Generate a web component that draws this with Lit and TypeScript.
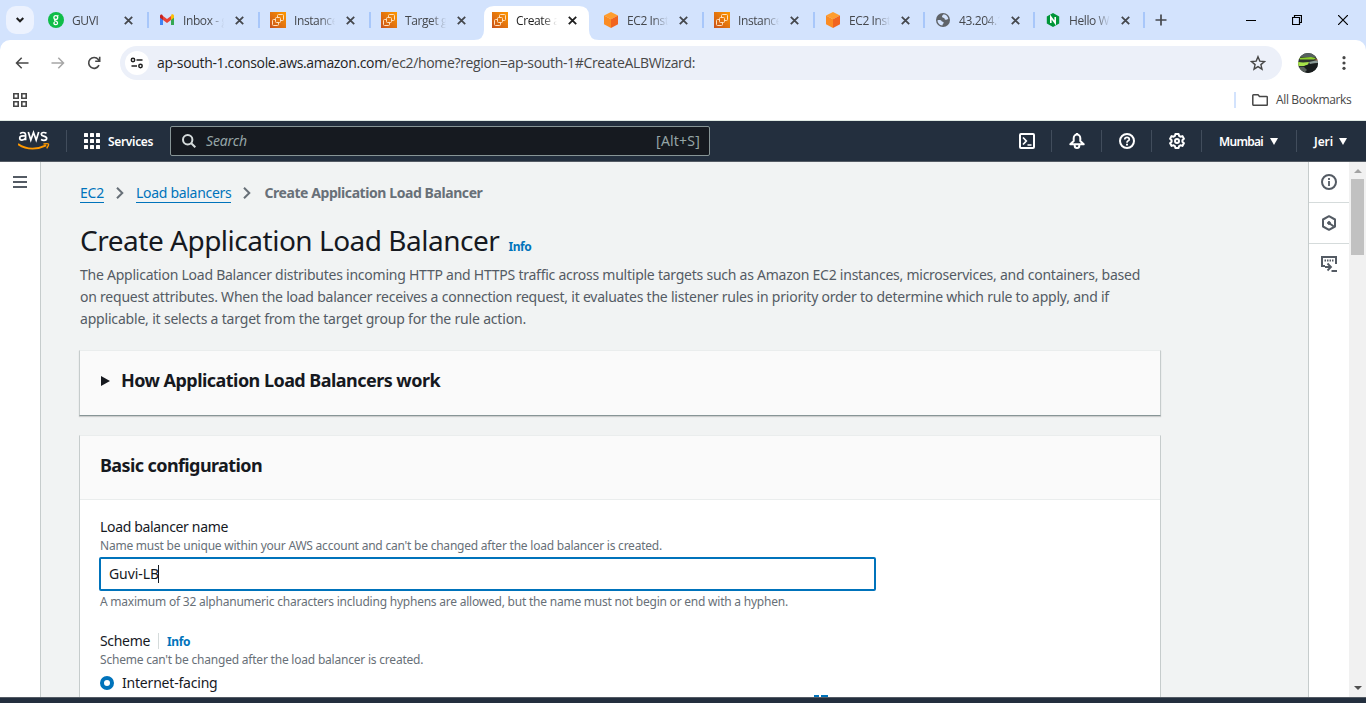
import { LitElement, html, css, svg, nothing } from "lit";
import { customElement } from "lit/decorators.js";

const favEc2 = html`<svg width="16" height="16" viewBox="0 0 16 16"><defs><linearGradient id="g" x1="0" y1="1" x2="1" y2="0"><stop offset="0" stop-color="#c8511b"/><stop offset="1" stop-color="#f90"/></linearGradient></defs><rect width="16" height="16" fill="url(#g)"/><g fill="none" stroke="#ffe0bd" stroke-width="1"><rect x="5.500" y="5.500" width="5" height="5" rx="1"/><path d="M7.500 5V3.500q0-1 1-1h4q1 0 1 1v4q0 1-1 1H11"/><path d="M5 7.500H3.500q-1 0-1 1v4q0 1 1 1h4q1 0 1-1V11"/></g></svg>`;
const favCube = html`<svg width="16" height="16" viewBox="0 0 16 16"><path d="M8 0l7 3.500L8 7.300 1 3.500z" fill="#ff9d2e"/><path d="M1 3.500l7 3.800V16l-7-3.800z" fill="#fb8c23"/><path d="M15 3.500L8 7.300V16l7-3.800z" fill="#f1641f"/></svg>`;
const favGuvi = html`<svg width="16" height="16" viewBox="0 0 16 16"><circle cx="8" cy="8" r="8" fill="#0fbd49"/><g fill="none" stroke="#fff" stroke-width="1.300"><circle cx="7.800" cy="5.600" r="1.900"/><path d="M9.500 3.900l.900-.500M7.200 7.500c-1 .7-.5 1.300.6 1.600 2.600.7 2 3.700 0 3.600-2.200-.1-2.500-2-1-3"/></g></svg>`;
const favMail = html`<svg width="16" height="16" viewBox="0 0 16 16"><path d="M1 4v9h3V6.500z" fill="#4285f4"/><path d="M15 4v9h-3V6.500z" fill="#34a853"/><path d="M12 4.200V8l3-2.200V4c0-1.600-1.700-2-2.700-1.300z" fill="#fbbc04"/><path d="M4 4v4l4 3 4-3V4L8 7z" fill="#ea4335"/><path d="M1 4v1.800L4 8V4l-.800-1.200C2.300 2.200 1 2.700 1 4z" fill="#c5221f"/></svg>`;
const favGlobe = html`<svg width="16" height="16" viewBox="0 0 16 16"><circle cx="8" cy="8" r="7" fill="#5f6368"/><path d="M2.500 8.300c2-.6 3.500-.3 4 .7.400 1 2 .5 2.200 1.800.1 1-1.200 1-1.300 2.700C4.500 13.300 2.500 11 2.500 8.300zM7 4.200c0-1 1.300-1 1.600-2C11.300 2.500 13 4.500 13.300 7c-1.500.1-2.100 1.200-3.200.6-.9-.5-.2-1.400-1.100-1.700C8 5.600 7 5.400 7 4.200z" fill="#d3e3fd"/></svg>`;
const favNginx = html`<svg width="16" height="16" viewBox="0 0 16 16"><path d="M8 1l6.200 3.500v7L8 15l-6.200-3.500v-7z" fill="#009639"/><path d="M5.800 11V5l4.400 6V5" fill="none" stroke="#fff" stroke-width="1.600"/></svg>`;

const tabs = [
  { icon: favGuvi, title: "GUVI", cls: "" },
  { icon: favMail, title: "Inbox - g", cls: "" },
  { icon: favEc2, title: "Instances", cls: "" },
  { icon: favEc2, title: "Target gr", cls: "plain" },
  { icon: favEc2, title: "Create ap", cls: "active" },
  { icon: favCube, title: "EC2 Insta", cls: "" },
  { icon: favEc2, title: "Instances", cls: "" },
  { icon: favCube, title: "EC2 Insta", cls: "" },
  { icon: favGlobe, title: "43.204.1", cls: "" },
  { icon: favNginx, title: "Hello Wo", cls: "" },
];

const ic = (w: number, h: number, body: unknown) =>
  html`<svg width=${w} height=${h} viewBox="0 0 ${w} ${h}" fill="none" stroke="currentColor" stroke-width="2">${body}</svg>`;

@customElement("app-root")
export class AppRoot extends LitElement {
  static styles = css`
    :host { display: flex; flex-direction: column; width: 1366px; height: 703px; overflow: hidden; background: #d3e3fd; font-family: "Noto Sans", "Open Sans", sans-serif; color: #16191f; font-size: 14px; white-space: nowrap; }
    * { box-sizing: border-box; }
    svg { display: block; flex: none; }
    .strip { height: 40px; display: flex; flex: none; font: 12px/16px "Open Sans", sans-serif; color: #45484d; }
    .chev { width: 28px; height: 28px; margin: 6px 4px 0 6px; border-radius: 10px; background: #ecf2fe; display: grid; place-items: center; color: #1f1f1f; }
    .tabs { display: grid; grid-template-columns: repeat(7, 111px) repeat(3, 110px); }
    .tab { display: flex; align-items: center; padding-left: 10px; height: 40px; position: relative; }
    .tab .ttl { width: 42px; margin-left: 8px; padding-top: 1px; overflow: hidden; letter-spacing: -0.4px; -webkit-mask-image: linear-gradient(90deg, #000 62%, transparent 98%); mask-image: linear-gradient(90deg, #000 62%, transparent 98%); }
    .tab .x { margin-left: 10px; }
    .tab:not(.plain):not(.active)::after { content: ""; position: absolute; right: 0; top: 12px; width: 2px; height: 16px; background: #a8c7fa; }
    .tab.active { color: #1f1f1f; }
    .tab.active > * { position: relative; }
    .tab.active .bgshape { position: absolute; left: -8px; top: 6px; }
    .plus { margin: 14px 0 0 10px; height: 12px; color: #45484d; }
    .win { margin-left: auto; display: flex; gap: 36px; padding: 15px 18px 0 0; color: #000; }
    .chrome { background: #fff; border-radius: 10px 10px 0 0; height: 81px; flex: none; border-bottom: 1px solid #dfe9e4; }
    .bar { height: 46px; display: flex; align-items: center; padding-left: 15px; color: #474747; }
    .bar .back { margin-right: 22px; } .bar .fwd { margin-right: 22px; color: #a6a6a6; }
    .omni { margin-left: 19px; width: 1162px; height: 34px; border-radius: 17px; background: #ecf0f9; display: flex; align-items: center; padding: 0 16px 0 5px; font: 14px/20px "Open Sans", sans-serif; color: #474747; }
    .site { width: 24px; height: 24px; border-radius: 50%; background: #fff; display: grid; place-items: center; margin-right: 8px; color: #1f1f1f; }
    .url b { font-weight: 400; color: #1f1f1f; }
    .url { letter-spacing: -0.339px; }
    .omni .star { margin-left: auto; }
    .bar .ava { margin: 0 24px 0 16px; }
    .marks { height: 28px; display: flex; align-items: center; padding: 0 14px 0 13px; color: #474747; font: 12px/16px "Open Sans", sans-serif; }
    .marks .div { margin-left: auto; width: 2px; height: 16px; background: #d3e3fd; margin-right: 16px; }
    .marks .allb { margin-left: 8px; width: 76px; letter-spacing: -0.35px; }
    .aws { height: 41px; flex: none; background: #232f3e; border-bottom: 1px solid #545b64; display: flex; align-items: center; padding-left: 18px; color: #fff; font-size: 13px; font-weight: 600; }
    .aws .sep { width: 1px; height: 22px; background: #414d5c; }
    .aws .logo { margin-right: 16px; }
    .svcs { margin: 0 17px 0 8px; width: 45px; font-size: 12px; letter-spacing: -0.33px; }
    .grid9 { margin-left: 17px; }
    .search { width: 540px; height: 30px; background: #161a20; border: 1px solid #879596; border-radius: 2px; display: flex; align-items: center; padding: 0 9px 0 11px; font-weight: 400; font-size: 14px; color: #95a5a6; }
    .search i { margin: 0 0 2px 10px; letter-spacing: -0.15px; }
    .search .key { margin: 0 0 2px auto; color: #95a5a6; letter-spacing: 0.2px; }
    .right { margin-left: auto; display: flex; align-items: center; }
    .right .i { width: 49px; display: grid; place-items: center; }
    .right .mb { margin: 0 7px 0 17px; width: 44px; font-size: 12px; letter-spacing: -0.7px; }
    .right .je { margin: 0 6px 0 17px; width: 19px; font-size: 12px; letter-spacing: -0.08px; }
    .tri { width: 0; border: 4px solid transparent; border-top: 7px solid #fff; border-bottom: 0; margin-right: 18px; }
    .tri.last { margin-right: 19px; }
    .main { flex: 1; min-height: 0; display: flex; overflow: hidden; }
    .lrail { width: 41px; border-right: 1px solid #c6cccc; background: #fff; padding: 14px 0 0 13px; color: #545b64; }
    .content { width: 1267px; background: #f1f3f3; padding: 20px 147px 0 38px; overflow: hidden; }
    .crumbs { display: flex; align-items: center; height: 22px; margin-left: 1px; color: #687078; }
    .crumbs a { color: #0073bb; line-height: 18px; border-bottom: 1px solid #0073bb; margin-top: 1px; }
    .crumbs svg { margin: 0 12px; }
    .crumbs b { margin: 0 0 2px 1px; }
    .c1 { letter-spacing: -0.214px; } .c2 { letter-spacing: -0.3px; } .c3 { letter-spacing: -0.423px; }
    .h { display: flex; align-items: baseline; margin: 18px 0 6px 1px; height: 36px; line-height: 36px; }
    h1 { margin: 0 9px 0 0; font-size: 28px; font-weight: 400; line-height: 36px; letter-spacing: -0.485px; }
    .info { color: #0073bb; font-size: 12px; font-weight: 700; letter-spacing: -0.4px; }
    .i2 { padding-top: 1px; }
    .desc { margin: 0 0 0 1px; line-height: 22px; color: #545b64; }
    .d1 { letter-spacing: -0.244px; } .d2 { letter-spacing: -0.23px; } .d3 { letter-spacing: -0.187px; }
    .e1 { letter-spacing: -0.543px; margin-bottom: 2px; } .b1 { letter-spacing: -0.6px; }
    .l1 { letter-spacing: -0.335px; } .l2 { letter-spacing: -0.326px; }
    .h1 { letter-spacing: -0.22px; } .h2 { letter-spacing: -0.223px; } .h3 { letter-spacing: -0.21px; }
    .n1 { letter-spacing: -0.074px; margin-bottom: 2px; } .r1 { letter-spacing: -0.2px; margin-bottom: 2px; }
    .card { width: 1082px; margin-top: 20px; background: #fff; border: 1px solid #d5dbdb; border-color: #eaeded #c6cccc #879596 #c6cccc; }
    .exp { height: 66px; display: flex; align-items: center; padding: 0 0 4px 21px; background: #fafafa; font-size: 18px; font-weight: 700; box-shadow: 0 1px 1px #00000026; }
    .exp i { width: 0; border: 5px solid transparent; border-left: 9px solid #16191f; border-right: 0; margin-right: 11px; }
    .cfg { margin-top: 19px; height: 400px; }
    .chead { height: 64px; background: #fafafa; border-bottom: 1px solid #eaeded; font-size: 18px; font-weight: 700; line-height: 58px; padding-left: 20px; }
    .form { padding: 16px 0 0 20px; }
    .lab { height: 22px; line-height: 22px; display: flex; align-items: center; }
    .lab .vs { width: 1px; height: 16px; background: #d5dbdb; margin: 0 8px; }
    .hint { font-size: 12px; height: 16px; line-height: 16px; color: #687078; }
    .inp { margin: 3px 0 3px -1px; width: 777px; height: 34px; border: 2px solid #0073bb; border-radius: 2px; display: flex; align-items: center; padding-left: 8px; }
    .caret { width: 1px; height: 18px; background: #16191f; margin-left: -1px; }
    .gap { margin-top: 20px; }
    .radio { display: flex; align-items: center; height: 22px; margin-top: 4px; }
    .radio i { width: 14px; height: 14px; border-radius: 50%; border: 4px solid #0073bb; margin-right: 8px; background: #fff; }
    .illus { display: flex; gap: 2px; margin: 1px 0 0 714px; }
    .illus i { width: 5px; height: 4px; background: #0073bb; } .illus i + i { width: 7px; }
    .rrail { width: 41px; border-left: 1px solid #c6cccc; background: #fff; color: #545b64; }
    .rrail div { height: 41px; border-bottom: 1px solid #d5dbdb; display: grid; place-items: center; }
    .rrail div:last-child { border: 0; height: 40px; }
    .scroll { width: 17px; background: #f1f1f1; display: flex; flex-direction: column; align-items: center; }
    .scroll .up { border: 4px solid transparent; border-top: 0; border-bottom: 4px solid #a3a3a3; margin-top: 7px; }
    .scroll .th { width: 13px; height: 76px; background: #c1c1c1; margin-top: 6px; }
    .scroll .dn { border: 4px solid transparent; border-bottom: 0; border-top: 4px solid #505050; margin: auto 0 7px; }
    .foot { height: 6px; flex: none; background: #232f3e; border-top: 1px solid #545b64; }
  `;

  render() {
    const xi = ic(9, 9, svg`<path d="M.8.8l7.400 7.400M8.200.8L.8 8.200" stroke-width="1.800"/>`);
    return html`
      <div class="strip">
        <div class="chev">${ic(8, 6, svg`<path d="M.7 1L4 4.300 7.300 1"/>`)}</div>
        <div class="tabs">
          ${tabs.map((t) => html`<div class="tab ${t.cls}">
            ${t.cls === "active" ? html`<svg class="bgshape" width="127" height="34" viewBox="0 0 127 34"><path d="M0 34Q10 34 10 24V10Q10 0 20 0H105Q115 0 115 10V24Q115 34 125 34z" fill="#fff"/></svg>` : nothing}
            ${t.icon}<span class="ttl">${t.title}</span><span class="x">${xi}</span></div>`)}
        </div>
        <div class="plus">${ic(12, 12, svg`<path d="M6 .5v11M.5 6h11" stroke-width="1.700"/>`)}</div>
        <div class="win">
          ${ic(10, 10, svg`<path d="M0 5.500h10" stroke-width="1"/>`)}
          ${ic(10, 10, svg`<path d="M.5 2.500h7v7h-7zM2.500 2.500v-2h7v7h-2" stroke-width="1.200"/>`)}
          ${ic(10, 10, svg`<path d="M0 0l10 10M10 0L0 10" stroke-width="1.200"/>`)}
        </div>
      </div>
      <div class="chrome">
        <div class="bar">
          <span class="back">${ic(14, 12, svg`<path d="M13.500 6H1.500M6.700.7L1.500 6l5.200 5.300" stroke-width="1.500"/>`)}</span>
          <span class="fwd">${ic(14, 12, svg`<path d="M.5 6h12M7.300.7L12.500 6l-5.200 5.300" stroke-width="1.500"/>`)}</span>
          ${ic(14, 14, svg`<path d="M12 9.200A5.400 5.400 0 1 1 11.300 3.500L12.500 5M12.700.8V5.300H8.200" stroke-width="1.600"/>`)}
          <div class="omni">
            <span class="site">${ic(14, 12, svg`<circle cx="3" cy="3" r="1.700" stroke-width="1.500"/><circle cx="10.500" cy="9" r="1.700" stroke-width="1.500"/><path d="M6.500 3h6M1.500 9h5.500" stroke-width="1.600"/>`)}</span>
            <span class="url"><b>ap-south-1.console.aws.amazon.com</b>/ec2/home?region=ap-south-1#CreateALBWizard:</span>
            <span class="star">${ic(16, 16, svg`<path d="M8 1.700l1.800 4.400 4.700.4-3.600 3.100 1.100 4.600L8 11.700l-4 2.500 1.100-4.600L1.500 6.500l4.700-.4z" stroke-width="1.400"/>`)}</span>
          </div>
          <span class="ava"><svg width="20" height="20" viewBox="0 0 20 20"><defs><clipPath id="c"><circle cx="10" cy="10" r="10"/></clipPath></defs><g clip-path="url(#c)"><path fill="#2c3330" d="M0 0h20v20H0z"/><path fill="#56605e" d="M0 0h20v4H0z"/><path fill="#8ed02c" d="M1 5l12-1 5 1-2 1.500H2z"/><path fill="#a6e24a" d="M0 9l5 .500 6-.500-1 2.500-4 1.500-6 0z"/><path fill="#8a9a96" d="M11 9l9-2v3l-8 1z"/><path fill="#181c1d" d="M4 14l8-3 8-1v10H4z"/><path fill="#59615c" d="M0 14h6l3 3-3 3H0z"/><path fill="#c86a3a" d="M16 7l4-1v1.500z"/></g></svg></span>
          <svg width="4" height="14" viewBox="0 0 4 14" fill="#474747"><circle cx="2" cy="1.700" r="1.600"/><circle cx="2" cy="7" r="1.600"/><circle cx="2" cy="12.300" r="1.600"/></svg>
        </div>
        <div class="marks">
          ${ic(14, 14, svg`<path d="M.8.8h4.400v4.400H.8zM8.800.8h4.400v4.400H8.800zM.8 8.800h4.400v4.400H.8zM8.800 8.800h4.400v4.400H8.800z" stroke-width="1.600"/>`)}
          <span class="div"></span>
          ${ic(16, 12, svg`<path d="M.8 10V1.500Q.8.800 1.500.8H6l1.500 1.700h7q.8 0 .8.8V10.500q0 .8-.8.800h-13Q.8 11.300.8 10z" stroke-width="1.500"/>`)}
          <span class="allb">All Bookmarks</span>
        </div>
      </div>
      <div class="aws">
        <svg class="logo" width="32" height="22" viewBox="0 0 32 22"><g fill="none" stroke="#fff" stroke-width="1.700"><path d="M2 3.600Q3.500 2.500 5 2.500q2.600 0 2.600 2.500v5.200M7.600 6q-5.900-.8-5.900 2 0 2.200 2.300 2.200Q6.500 10 7.600 7.800M10.300 2l2.500 8 2.700-7.500L18.200 10l2.500-8M28.500 3.200Q27 2.400 25.500 2.500q-2.200.1-2.200 1.700 0 1.300 2.400 1.900 3 .8 3 2.200 0 2-2.700 2-1.600 0-3-.8"/></g><path d="M0 14q6.500 4.600 14.500 4.600 7 0 13.700-3.200" fill="none" stroke="#f90" stroke-width="1.900"/><path d="M25.500 14q4.500-.9 5 0t-1.800 4.300" fill="none" stroke="#f90" stroke-width="1.400"/></svg>
        <span class="sep"></span>
        <svg class="grid9" width="16" height="16" viewBox="0 0 16 16" fill="#fff">${[0, 6, 12].map((y) => [0, 6, 12].map((x) => svg`<rect x=${x} y=${y} width="4" height="4" rx=".5"/>`))}</svg>
        <span class="svcs">Services</span>
        <div class="search"><span>${ic(14, 14, svg`<circle cx="5.700" cy="5.700" r="4.700" stroke="#d5dbdb"/><path d="M9 9l4.300 4.300" stroke="#d5dbdb"/>`)}</span><i class="s1">Search</i><span class="key">[Alt+S]</span></div>
        <div class="right">
          <span class="i">${ic(16, 16, svg`<rect x="1" y="1" width="14" height="14" rx="1"/><path d="M4 4.500L7.300 8 4 11.500M8.500 12h4" stroke-width="1.700"/>`)}</span>
          <span class="sep"></span>
          <span class="i">${ic(16, 16, svg`<path d="M1.300 11.300L4.700 8V5.300A3.300 3.800 0 0 1 11.300 5.300V8L14.700 11.300z" stroke-linejoin="round"/><path d="M5.700 12v.8q0 2.200 2.300 2.200t2.300-2.200V12M8 0v2"/>`)}</span>
          <span class="sep"></span>
          <span class="i">${ic(16, 16, svg`<circle cx="8" cy="8" r="7"/><path d="M5.700 6.500Q5.800 4.300 8 4.300t2.300 2Q10.300 7.400 8.900 8 8 8.500 8 9.700" stroke-width="1.700"/><path d="M8 10.700v1.700"/>`)}</span>
          <span class="sep"></span>
          <span class="i">${ic(16, 16, svg`<path d="M6.400 1h3.200l.5 1.900 1.300.8 2-.6 1.500 2.600-1.500 1.500v1.600l1.500 1.500-1.500 2.600-2-.6-1.300.8-.5 1.900H6.400l-.5-1.900-1.300-.8-2 .6-1.500-2.600 1.500-1.500V7.200L1.100 5.700l1.500-2.600 2 .6 1.300-.8z" stroke-width="2" stroke-linejoin="round"/><circle cx="8" cy="8" r="2"/>`)}</span>
          <span class="sep"></span>
          <span class="mb">Mumbai</span><i class="tri"></i>
          <span class="sep"></span>
          <span class="je">Jeri</span><i class="tri last"></i>
        </div>
      </div>
      <div class="main">
        <div class="lrail">${ic(14, 12, svg`<path d="M0 1h14M0 6h14M0 11h14"/>`)}</div>
        <div class="content">
          <div class="crumbs"><a class="c1">EC2</a>${ic(8, 12, svg`<path d="M1 .7L6.300 6 1 11.300"/>`)}<a class="c2">Load balancers</a>${ic(8, 12, svg`<path d="M1 .7L6.300 6 1 11.300"/>`)}<b class="c3">Create Application Load Balancer</b></div>
          <div class="h"><h1>Create Application Load Balancer</h1><span class="info i1">Info</span></div>
          <p class="desc"><span class="d1">The Application Load Balancer distributes incoming HTTP and HTTPS traffic across multiple targets such as Amazon EC2 instances, microservices, and containers, based</span><br><span class="d2">on request attributes. When the load balancer receives a connection request, it evaluates the listener rules in priority order to determine which rule to apply, and if</span><br><span class="d3">applicable, it selects a target from the target group for the rule action.</span></p>
          <div class="card exp"><i></i><span class="e1">How Application Load Balancers work</span></div>
          <div class="card cfg">
            <div class="chead"><span class="b1">Basic configuration</span></div>
            <div class="form">
              <div class="lab"><span class="l1">Load balancer name</span></div>
              <div class="hint"><span class="h1">Name must be unique within your AWS account and can't be changed after the load balancer is created.</span></div>
              <div class="inp"><span class="n1">Guvi-LB</span><i class="caret"></i></div>
              <div class="hint"><span class="h2">A maximum of 32 alphanumeric characters including hyphens are allowed, but the name must not begin or end with a hyphen.</span></div>
              <div class="lab gap"><span class="l2">Scheme</span><i class="vs"></i><span class="info i2">Info</span></div>
              <div class="hint"><span class="h3">Scheme can't be changed after the load balancer is created.</span></div>
              <div class="radio"><i></i><span class="r1">Internet-facing</span></div>
              <div class="illus"><i></i><i></i></div>
            </div>
          </div>
        </div>
        <div class="rrail">
          <div>${ic(16, 16, svg`<circle cx="8" cy="8" r="7"/><path d="M8 7v5M8 4v2" stroke-width="1.800"/>`)}</div>
          <div>${ic(16, 16, svg`<path d="M8 1.200l6 3.300v7l-6 3.300-6-3.300v-7z" stroke-linejoin="round"/><path d="M8 8l4.500 3.200"/><circle cx="8" cy="8" r="1.400" fill="currentColor" stroke-width="1"/>`)}</div>
          <div>${ic(16, 16, svg`<path d="M15 8V1H1v9h3" /><path d="M3.500 4.500h9" stroke-dasharray="1.500 1"/><path d="M4 11h5M6.500 7.500L10 11l-3.500 3.500" stroke-width="1.800"/><path d="M10.500 15H16"/>`)}</div>
        </div>
        <div class="scroll"><i class="up"></i><i class="th"></i><i class="dn"></i></div>
      </div>
      <div class="foot"></div>
    `;
  }
}
